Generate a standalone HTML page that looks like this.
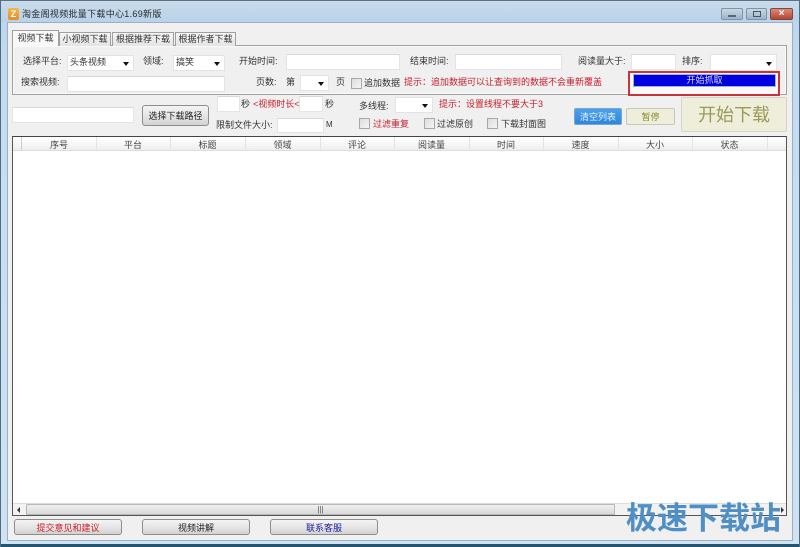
<!DOCTYPE html>
<html><head><meta charset="utf-8">
<style>
html,body{margin:0;padding:0;background:#f0f0f0}
#w{position:relative;width:800px;height:547px;overflow:hidden;background:linear-gradient(#b9d2e8,#c4dbef 60px,#cfe3f3);font-family:"Liberation Sans","Noto Sans CJK SC",sans-serif;font-size:9px;color:#333}
#w div{position:absolute;box-sizing:border-box}
.t{white-space:nowrap;line-height:12px;height:12px;transform:translateY(1px)}
.r{color:#c8202c}
.i{background:#fff;border:1px solid #e4e4e4;border-top-color:#d8d8d8}
.c{background:#fff;border:1px solid #e4e4e4}
.c:after{content:"";position:absolute;right:4px;top:50%;margin-top:-1px;border:3px solid transparent;border-top:4px solid #111;border-bottom:0}
.cb{width:11px;height:11px;background:linear-gradient(135deg,#ddd,#f4f4f4);border:1px solid #a8a8a8}
.b{background:linear-gradient(#f4f4f4,#e6e6e6 50%,#d2d2d2);border:1px solid #8e8e8e;border-radius:3px;text-align:center;color:#222}
.tab{border:1px solid #a0a0a0;border-bottom:0;background:linear-gradient(#f6f6f6,#e4e4e4);text-align:center;line-height:13px;height:15px;top:31px;color:#333;white-space:nowrap}
.h{top:137px;height:14px;line-height:16px;text-align:center;color:#444;white-space:nowrap}
.s{top:137px;width:1px;height:13px;background:#e4e4e4}
</style></head><body>
<div id="w">
<div style="left:0;top:0;width:800px;height:1px;background:#5e7182"></div>
<div style="left:0;top:1px;width:800px;height:21px;background:linear-gradient(#c9dbea,#b8d3ea)"></div>
<div style="left:7px;top:22px;width:786px;height:519px;background:#f0f0f0;border:1px solid #9cb0c2"></div>
<div style="left:0;top:544px;width:800px;height:3px;background:#27536e"></div>
<div style="left:0;top:0;width:1px;height:547px;background:#4c6d86"></div>
<div style="left:799px;top:0;width:1px;height:547px;background:#4c6d86"></div>
<div style="left:8px;top:8px;width:11px;height:12px;background:linear-gradient(#f4b64c,#e58e22);border-radius:2px;color:#fff;font-size:9px;line-height:12px;text-align:center;font-weight:bold">Z</div>
<div class="t" style="left:22px;top:7px;color:#2a2a2a;font-size:9px;letter-spacing:.3px">淘金阁视频批量下载中心1.69新版</div>
<div style="left:721px;top:8px;width:22px;height:12px;background:linear-gradient(#c7d7e4,#9db5c8);border:1px solid #7f93a4;border-radius:2px"><div style="left:6px;top:6px;width:8px;height:2px;background:#fff;border:1px solid #567"></div></div>
<div style="left:746px;top:8px;width:21px;height:12px;background:linear-gradient(#c7d7e4,#9db5c8);border:1px solid #7f93a4;border-radius:2px"><div style="left:6px;top:2px;width:8px;height:6px;border:1px solid #456"></div></div>
<div style="left:770px;top:8px;width:23px;height:12px;background:linear-gradient(#dc8a78,#b84530);border:1px solid #7e4a40;border-radius:2px;color:#fff;font-weight:bold;font-size:10px;line-height:10px;text-align:center">×</div>

<div style="left:12px;top:45px;width:775px;height:50px;background:#f0f0f0;border:1px solid #a0a0a0;box-shadow:inset 0 0 0 1px #fafafa"></div>
<div class="tab" style="left:59px;width:52px;top:32px;height:14px">小视频下载</div>
<div class="tab" style="left:112px;width:62px;top:32px;height:14px">根据推荐下载</div>
<div class="tab" style="left:175px;width:61px;top:32px;height:14px">根据作者下载</div>
<div class="tab" style="left:12px;width:47px;top:30px;height:16px;background:#f8f8f8;line-height:15px;z-index:2">视频下载</div>

<div class="t" style="left:23px;top:54px">选择平台:</div>
<div class="c" style="left:67px;top:55px;width:67px;height:16px;padding-left:2px;line-height:13px">头条视频</div>
<div class="t" style="left:143px;top:54px">领域:</div>
<div class="c" style="left:173px;top:55px;width:52px;height:16px;padding-left:2px;line-height:13px">搞笑</div>
<div class="t" style="left:239px;top:54px">开始时间:</div>
<div class="i" style="left:286px;top:54px;width:114px;height:16px"></div>
<div class="t" style="left:410px;top:54px">结束时间:</div>
<div class="i" style="left:455px;top:54px;width:107px;height:16px"></div>
<div class="t" style="left:578px;top:54px">阅读量大于:</div>
<div class="i" style="left:631px;top:54px;width:45px;height:16px"></div>
<div class="t" style="left:682px;top:54px">排序:</div>
<div class="c" style="left:710px;top:54px;width:67px;height:17px"></div>

<div class="t" style="left:21px;top:75px">搜索视频:</div>
<div class="i" style="left:67px;top:76px;width:158px;height:16px"></div>
<div class="t" style="left:256px;top:75px">页数:</div>
<div class="t" style="left:286px;top:75px">第</div>
<div class="c" style="left:300px;top:75px;width:29px;height:16px"></div>
<div class="t" style="left:336px;top:75px">页</div>
<div class="cb" style="left:351px;top:78px"></div>
<div class="t" style="left:364px;top:76px">追加数据</div>
<div class="t r" style="left:404px;top:75px">提示：追加数据可以让查询到的数据不会重新覆盖</div>
<div style="left:628px;top:71px;width:152px;height:25px;border:2px solid #c8343c;background:#f8f8f8"></div>
<div style="left:633px;top:74px;width:143px;height:13px;background:#0000e0;border:1px solid #9fb4d0;color:#dde;text-align:center;line-height:10px">开始抓取</div>

<div class="i" style="left:12px;top:107px;width:122px;height:16px"></div>
<div class="b" style="left:142px;top:105px;width:67px;height:21px;line-height:20px">选择下载路径</div>
<div class="i" style="left:217px;top:96px;width:23px;height:16px"></div>
<div class="t" style="left:241px;top:97px">秒</div>
<div class="t r" style="left:253px;top:97px">&lt;视频时长&lt;</div>
<div class="i" style="left:299px;top:96px;width:24px;height:16px"></div>
<div class="t" style="left:325px;top:97px">秒</div>
<div class="t" style="left:359px;top:99px">多线程:</div>
<div class="c" style="left:395px;top:97px;width:38px;height:16px"></div>
<div class="t r" style="left:439px;top:97px">提示：设置线程不要大于3</div>
<div class="t" style="left:216px;top:118px">限制文件大小:</div>
<div class="i" style="left:277px;top:118px;width:47px;height:15px"></div>
<div class="t" style="left:326px;top:118px;font-size:8px">M</div>
<div class="cb" style="left:359px;top:118px"></div>
<div class="t r" style="left:373px;top:117px">过滤重复</div>
<div class="cb" style="left:424px;top:118px"></div>
<div class="t" style="left:437px;top:117px">过滤原创</div>
<div class="cb" style="left:487px;top:118px"></div>
<div class="t" style="left:501px;top:117px">下载封面图</div>
<div style="left:574px;top:108px;width:48px;height:17px;background:linear-gradient(#4aa0ea,#2f86dc);border:1px solid #7aa8cc;border-radius:2px;color:#e8f4ff;text-align:center;line-height:16px">清空列表</div>
<div style="left:626px;top:108px;width:49px;height:17px;background:#efeeda;border:1px solid #c8c8b8;border-radius:2px;color:#8a8a30;text-align:center;line-height:16px">暂停</div>
<div style="left:681px;top:97px;width:106px;height:35px;background:#efeeda;border:1px solid #d4d4c8;border-radius:2px;color:#9a9a58;text-align:center;line-height:34px;font-size:18px">开始下载</div>

<div style="left:12px;top:136px;width:775px;height:380px;background:#fff;border:1px solid #555;border-top:1px solid #444"></div>
<div style="left:13px;top:137px;width:773px;height:14px;background:linear-gradient(#fff,#f6f6f6 60%,#eee);border-bottom:1px solid #ddd"></div>
<div class="s" style="left:21px;background:#ccc"></div>
<div class="h" style="left:22px;width:74px">序号</div><div class="s" style="left:96px"></div>
<div class="h" style="left:96px;width:74px">平台</div><div class="s" style="left:170px"></div>
<div class="h" style="left:170px;width:75px">标题</div><div class="s" style="left:245px"></div>
<div class="h" style="left:245px;width:75px">领域</div><div class="s" style="left:320px"></div>
<div class="h" style="left:320px;width:74px">评论</div><div class="s" style="left:394px"></div>
<div class="h" style="left:394px;width:75px">阅读量</div><div class="s" style="left:469px"></div>
<div class="h" style="left:469px;width:74px">时间</div><div class="s" style="left:543px"></div>
<div class="h" style="left:543px;width:75px">速度</div><div class="s" style="left:618px"></div>
<div class="h" style="left:618px;width:74px">大小</div><div class="s" style="left:692px"></div>
<div class="h" style="left:692px;width:75px">状态</div><div class="s" style="left:767px"></div>

<div style="left:13px;top:503px;width:773px;height:12px;background:#f2f2f2;border-top:1px solid #ddd"></div>
<div style="left:26px;top:504px;width:589px;height:11px;background:linear-gradient(#f0f0f0,#d8d8d8);border:1px solid #b8b8b8;border-radius:1px;text-align:center;line-height:9px;font-size:8px;color:#555">|||</div>
<div style="left:17px;top:507px;border:3px solid transparent;border-right:3px solid #333;border-left:0"></div>
<div style="left:781px;top:507px;border:3px solid transparent;border-left:3px solid #333;border-right:0"></div>

<div class="b" style="left:14px;top:519px;width:108px;height:16px;line-height:16px;color:#d02028">提交意见和建议</div>
<div class="b" style="left:142px;top:519px;width:108px;height:16px;line-height:16px">视频讲解</div>
<div class="b" style="left:270px;top:519px;width:108px;height:16px;line-height:16px;color:#2020a0">联系客服</div>

<div class="t" style="left:626px;top:501px;height:34px;line-height:34px;font-size:31px;font-weight:bold;color:#4f8fc4">极速下载站</div>
</div>
</body></html>
